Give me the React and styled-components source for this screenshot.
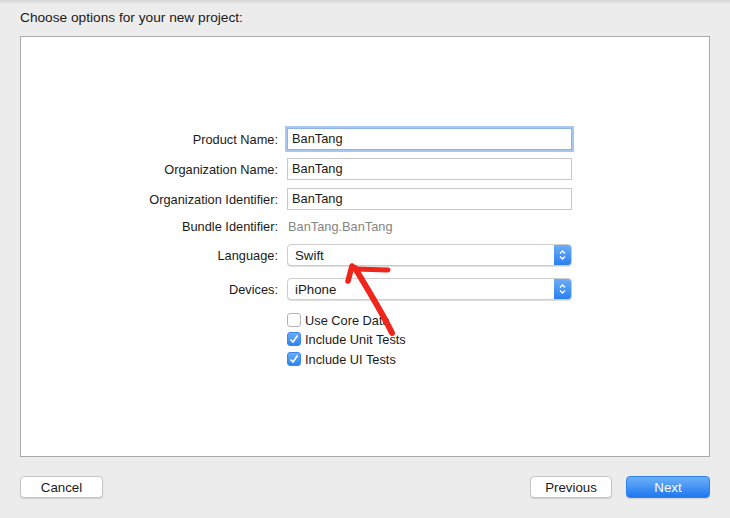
import React from "react";
import styled, { createGlobalStyle } from "styled-components";

const Global = createGlobalStyle`
  html, body {
    margin: 0;
    padding: 0;
    background: #ececec;
  }
  body {
    font-family: "Liberation Sans", Arial, sans-serif;
    font-size: 12px;
    color: #1a1a1a;
  }
`;

const Window = styled.div`
  position: relative;
  width: 730px;
  height: 518px;
  background: linear-gradient(#d6d6d6 0, #e4e4e4 3px, #ececec 4px);
  box-sizing: border-box;
  padding: 0 20px;
  display: flex;
  flex-direction: column;
`;

const Heading = styled.div`
  font-size: 13.7px;
  height: 36px;
  line-height: 36px;
`;

const Panel = styled.div`
  height: 421px;
  box-sizing: border-box;
  background: #fff;
  border: 1px solid #a9a9a9;
  padding-top: 91px;
  display: flex;
  flex-direction: column;
`;

const Row = styled.div`
  display: grid;
  grid-template-columns: 257px 285px;
  column-gap: 9px;
  align-items: center;
  height: ${(p) => p.h || 22}px;
  margin-top: ${(p) => p.mt || 0}px;
`;

const Label = styled.div`
  text-align: right;
  font-size: 12.8px;
`;

const Field = styled.div`
  box-sizing: border-box;
  height: 22px;
  border: 1px solid ${(p) => (p.focus ? "#8fb3e6" : "#c9c9c9")};
  box-shadow: ${(p) => (p.focus ? "0 0 0 2px #a9c6ee" : "none")};
  padding: 0 4px;
  line-height: 20px;
  font-size: 12.8px;
  background: #fff;
`;

const Static = styled.div`
  color: #858585;
  font-size: 12.8px;
  padding-left: 1px;
`;

const Popup = styled.div`
  box-sizing: border-box;
  height: 22px;
  border: 1px solid #cdcdcd;
  border-radius: 4px;
  display: flex;
  align-items: center;
  background: #fff;
  box-shadow: 0 1px 0 #e0e0e0;
  overflow: hidden;
`;

const PopupText = styled.div`
  flex: 1;
  padding-left: 7px;
  font-size: 13.3px;
`;

const Stepper = styled.div`
  width: 17px;
  height: 100%;
  background: linear-gradient(#6aaef7, #2a7ff0);
  display: flex;
  align-items: center;
  justify-content: center;
`;

const Check = styled.div`
  display: flex;
  align-items: center;
  gap: 4px;
  font-size: 12.8px;
`;

const Box = styled.div`
  width: 14px;
  height: 14px;
  box-sizing: border-box;
  border-radius: 3px;
  border: 1px solid ${(p) => (p.on ? "#3a87ef" : "#b4b4b4")};
  background: ${(p) => (p.on ? "linear-gradient(#68aef8, #2f82f0)" : "#fff")};
  display: flex;
  align-items: center;
  justify-content: center;
`;

const Footer = styled.div`
  display: flex;
  align-items: center;
  padding-top: 19px;
  gap: 14px;
`;

const Spacer = styled.div`
  flex: 1;
`;

const Button = styled.div`
  box-sizing: border-box;
  width: ${(p) => p.w}px;
  height: 22px;
  border-radius: 4px;
  font-size: 13.3px;
  display: flex;
  align-items: center;
  justify-content: center;
  color: ${(p) => (p.primary ? "#fff" : "#1a1a1a")};
  background: ${(p) => (p.primary ? "linear-gradient(#6cb0fa, #1f78ef)" : "#fff")};
  border: 1px solid ${(p) => (p.primary ? "#2f82ee" : "#c4c4c4")};
  box-shadow: 0 1px 1px rgba(0, 0, 0, 0.12);
`;

const Scribble = styled.svg`
  position: absolute;
  left: 0;
  top: 0;
  pointer-events: none;
`;

const Arrows = () => (
  <svg width="7" height="12" viewBox="0 0 7 12">
    <path d="M1 4.5 L3.5 2 L6 4.5 M1 7.5 L3.5 10 L6 7.5" fill="none" stroke="#fff" strokeWidth="1.3" />
  </svg>
);

const Tick = () => (
  <svg width="10" height="10" viewBox="0 0 10 10">
    <path d="M1.5 5.5 L4 8 L8.5 1.5" fill="none" stroke="#fff" strokeWidth="1.6" />
  </svg>
);

export default function App() {
  return (
    <>
      <Global />
      <Window>
        <Heading>Choose options for your new project:</Heading>
        <Panel>
          <Row>
            <Label>Product Name:</Label>
            <Field focus>BanTang</Field>
          </Row>
          <Row mt={8}>
            <Label>Organization Name:</Label>
            <Field>BanTang</Field>
          </Row>
          <Row mt={8}>
            <Label>Organization Identifier:</Label>
            <Field>BanTang</Field>
          </Row>
          <Row mt={6} h={20}>
            <Label>Bundle Identifier:</Label>
            <Static>BanTang.BanTang</Static>
          </Row>
          <Row mt={8}>
            <Label>Language:</Label>
            <Popup>
              <PopupText>Swift</PopupText>
              <Stepper><Arrows /></Stepper>
            </Popup>
          </Row>
          <Row mt={12}>
            <Label>Devices:</Label>
            <Popup>
              <PopupText>iPhone</PopupText>
              <Stepper><Arrows /></Stepper>
            </Popup>
          </Row>
          <Row mt={11} h={18}>
            <span />
            <Check><Box />Use Core Data</Check>
          </Row>
          <Row mt={1} h={18}>
            <span />
            <Check><Box on><Tick /></Box>Include Unit Tests</Check>
          </Row>
          <Row mt={2} h={18}>
            <span />
            <Check><Box on><Tick /></Box>Include UI Tests</Check>
          </Row>
        </Panel>
        <Footer>
          <Button w={83}>Cancel</Button>
          <Spacer />
          <Button w={82}>Previous</Button>
          <Button w={84} primary>Next</Button>
        </Footer>
        <Scribble width="730" height="518">
          <g fill="none" stroke="#f0261c" strokeLinecap="round" strokeLinejoin="round">
            <path d="M392 333 C382 312 368 290 355 268" strokeWidth="6" />
            <path d="M352 266 L348 281" strokeWidth="5.5" />
            <path d="M355 269 L388 270" strokeWidth="5" />
          </g>
        </Scribble>
      </Window>
    </>
  );
}
